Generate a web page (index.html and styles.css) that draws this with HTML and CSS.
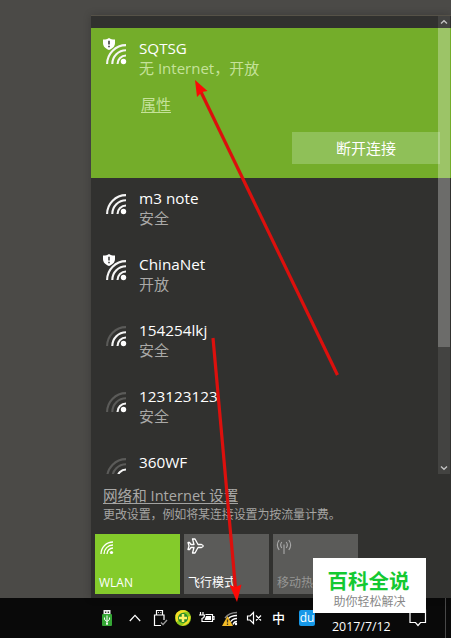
FILE: index.html
```html
<!DOCTYPE html>
<html lang="zh-CN">
<head>
<meta charset="utf-8">
<title>WLAN</title>
<link rel="stylesheet" href="styles.css">
</head>
<body>
<svg class="defs" width="0" height="0" aria-hidden="true">
  <defs>
    <path id="arc1" d="M11.5 20A8.5 8.5 0 0 1 20 11.5"/>
    <path id="arc2" d="M6.3 20A13.7 13.7 0 0 1 20 6.3"/>
    <path id="arc3" d="M1.1 20A18.9 18.9 0 0 1 20 1.1"/>
    <g id="shield"><path fill="#fff" d="M6 0C8 1.4 10 1.6 12 1.5V5C12 8.500 9.500 10.600 6 12C2.500 10.600 0 8.500 0 5V1.500C2 1.600 4 1.400 6 0Z"/><path class="mark" d="M6 2.800V6.600M6 7.700V9.200"/></g>
  </defs>
</svg>
<div class="screen">
  <main class="flyout">
    <div class="list">
      <section class="active">
        <svg class="wifi green" width="24" height="27" viewBox="-3 -6 24 27"><g class="arc"><use href="#arc1"/><use href="#arc2"/><use href="#arc3"/></g><circle cx="17.500" cy="17.500" r="2.700"/><path class="cut" d="M-3 -6H10V1L4 7L-3 4Z"/><use href="#shield" x="-3" y="-6"/></svg>
        <div class="info">
          <div class="name sq">SQTSG</div>
          <div class="state">无 Internet，开放</div>
          <a class="props">属性</a>
        </div>
        <button class="disconnect">断开连接</button>
      </section>
      <section class="network">
        <svg class="wifi" width="24" height="27" viewBox="-3 -6 24 27"><g class="arc"><use href="#arc1"/><use href="#arc2"/><use href="#arc3"/></g><circle cx="17.500" cy="17.500" r="2.700"/></svg>
        <div class="info"><div class="name">m3 note</div><div class="state">安全</div></div>
      </section>
      <section class="network">
        <svg class="wifi" width="24" height="27" viewBox="-3 -6 24 27"><g class="arc"><use href="#arc1"/><use href="#arc2"/><use href="#arc3"/></g><circle cx="17.500" cy="17.500" r="2.700"/><path class="cut" d="M-3 -6H10V1L4 7L-3 4Z"/><use href="#shield" x="-3" y="-6"/></svg>
        <div class="info"><div class="name">ChinaNet</div><div class="state">开放</div></div>
      </section>
      <section class="network">
        <svg class="wifi" width="24" height="27" viewBox="-3 -6 24 27"><g class="arc"><use href="#arc1"/><use href="#arc2"/><use class="dim" href="#arc3"/></g><circle cx="17.500" cy="17.500" r="2.700"/></svg>
        <div class="info"><div class="name">154254lkj</div><div class="state">安全</div></div>
      </section>
      <section class="network">
        <svg class="wifi" width="24" height="27" viewBox="-3 -6 24 27"><g class="arc"><use href="#arc1"/><use class="dim" href="#arc2"/><use class="dim" href="#arc3"/></g><circle cx="17.500" cy="17.500" r="2.700"/></svg>
        <div class="info"><div class="name">123123123</div><div class="state">安全</div></div>
      </section>
      <section class="network last">
        <svg class="wifi" width="24" height="27" viewBox="-3 -6 24 27"><g class="arc"><use href="#arc1"/><use class="dim" href="#arc2"/><use class="dim" href="#arc3"/></g></svg>
        <div class="info"><div class="name">360WF</div></div>
      </section>
    </div>
    <div class="scrollbar">
      <svg width="12" height="12"><path d="M3 7.500L6 4.800L9 7.500"/></svg>
      <div class="thumb"></div>
      <svg class="down" width="12" height="12"><path d="M3 4.500L6 7.200L9 4.500"/></svg>
    </div>
    <footer class="settings">
      <a class="link">网络和 Internet 设置</a>
      <p class="hint">更改设置，例如将某连接设置为按流量计费。</p>
      <div class="tiles">
        <div class="tile on">
          <svg width="18" height="18"><g fill="none" stroke="#fff" stroke-width="1.300"><path d="M3 16A12 12 0 0 1 15 4M6 16A9 9 0 0 1 15 7M9 16A6 6 0 0 1 15 10"/></g><circle cx="13.500" cy="14.500" r="1.600" fill="#fff"/></svg>
          <span>WLAN</span>
        </div>
        <div class="tile">
          <svg width="18" height="18"><path fill="none" stroke="#fff" stroke-width="1.300" stroke-linejoin="round" d="M5.500 1H8L11 6.500H14.500Q18 8 14.500 9.500H11L8 15H5.500L7 9.500H4L2.500 11.500H1L2 8L1 4.500H2.500L4 6.500H7Z"/></svg>
          <span>飞行模式</span>
        </div>
        <div class="tile off">
          <svg width="18" height="18"><path fill="none" stroke="#aaa" stroke-width="1.100" d="M3.200 2Q-.5 7 3.200 12M5.800 4Q3.500 7 5.800 10M12.800 2Q16.500 7 12.800 12M10.200 4Q12.500 7 10.200 10M8 6.500V16"/></svg>
          <span>移动热点</span>
        </div>
      </div>
    </footer>
  </main>
  <nav class="taskbar">
    <svg width="10" height="18" viewBox="0 0 10 18"><path fill="#eee" d="M1.500 1H8.500V5H1.500Z"/><path fill="#333" d="M3 2.500H4.300V4H3ZM5.700 2.500H7V4H5.700Z"/><rect y="5" width="10" height="12" rx="1" fill="#35a635"/><path fill="none" stroke="#fff" d="M5 6.500V15.500M2.500 8.500V10.500L5 12.500L7.500 10.500V8.500"/><circle cx="5" cy="14.800" r="1" fill="#fff"/></svg>
    <svg width="14" height="18"><path class="line" d="M.8 12L6 6.300L11.200 12"/></svg>
    <svg width="15" height="18"><path class="line" d="M3.500 6V1.500H9.500V6M11 11V6H1.500V16.500H8"/><path class="line" d="M5 3.500H5.800M7.400 3.500H8.200"/><path fill="none" stroke="#999" stroke-width="1.400" d="M8 13.500L10 15.500L14 11"/></svg>
    <svg width="18" height="18"><circle cx="9" cy="9" r="8" fill="#8fcb1c"/><path fill="#f5dd26" d="M1.500 6A8 8 0 0 1 14 3Q8 2 6 7Q5 12 2 13ZM16.500 7Q17 16 7 17Q13 14 13 8Z"/><circle cx="9" cy="9" r="5" fill="#27892b"/><path stroke="#fff36b" stroke-width="2.500" d="M9 5V13M5 9H13"/></svg>
    <svg width="17" height="18"><path fill="none" stroke="#fff" stroke-width="1.200" d="M1.500 3V6M4 3V6M0 6H5.500Q5.500 9 3 9.500V12.500H6M6.500 5.500H13.500V12.500H5M13.500 7.500H15V10.500H13.500"/><path fill="#fff" d="M7 7H12V11H5.500Z"/></svg>
    <svg width="16" height="18"><path fill="none" stroke="#888" stroke-width="1.300" d="M3 9Q7 3.600 15 3.500"/><path fill="none" stroke="#fff" stroke-width="1.300" d="M6 10Q9 6.500 15 6.500M8.500 13Q10.500 9.500 15 9.500M11 15.500Q12 12.500 15 12.500"/><circle cx="14" cy="15" r="1.200" fill="#fff"/><path fill="#f3bb27" d="M5.500 7L11 17H0Z"/><path stroke="#43391c" stroke-width="1.300" d="M5.500 10.500V13.500M5.500 14.500V16"/></svg>
    <svg width="16" height="18"><path class="line" d="M1.500 7V11H4L7.500 14.500V3.500L4 7ZM10 6.500L15 11.500M15 6.500L10 11.500"/></svg>
    <span class="ime">中</span>
    <span class="du">du</span>
    <span class="date">2017/7/12</span>
    <svg class="action" width="18" height="20"><path class="line" d="M1 2V14.500H6.500L9 17.500L11.500 14.500H16.500V2Z"/></svg>
    <span class="peek"></span>
  </nav>
  <div class="watermark"><strong>百科全说</strong><span>助你轻松解决</span></div>
  <svg class="arrows" width="451" height="638" viewBox="0 0 451 638">
    <path d="M337.500 375L201 92" stroke="#dc100d" stroke-width="3.200"/>
    <path d="M213 338L235.500 588" stroke="#dc100d" stroke-width="3.200"/>
    <path fill="#fb0a06" d="M195 80L207.500 91L202 92L197 97Z"/>
    <path fill="#fb0a06" d="M237 602L229.500 585L235.500 587L241.500 584.500Z"/>
  </svg>
</div>
</body>
</html>
```
FILE: styles.css
```css
* { box-sizing: border-box; }
body { margin: 0; font-family: "Open Sans", "Noto Sans CJK SC", sans-serif; }
svg { display: block; flex: none; }
.defs { position: absolute; }
.screen {
  position: relative;
  width: 451px;
  height: 638px;
  overflow: hidden;
  padding-top: 15px;
  background: #4b4a47;
}
.flyout {
  position: relative;
  height: 583px;
  margin-left: 91px;
  padding-top: 12px;
  background: #31312f;
  border-top: 1px solid #565248;
  box-shadow: 0 0 8px #0003;
}
.list { height: 446px; overflow: hidden; }
.active {
  display: grid;
  grid-template-columns: 48px 1fr;
  grid-template-rows: 104px 32px;
  height: 150px;
  background: #74ad2a;
}
.network { display: flex; height: 66px; }
.wifi { margin: 10px 12px 0; fill: #fff; }
.arc { fill: none; stroke: #f5f5f5; stroke-width: 2.1; }
.dim { stroke: #5b5b59; }
.cut { fill: #31312f; }
.green .cut { fill: #74ad2a; }
.mark { stroke: #333; stroke-width: 1.5; }
.info { padding-top: 10px; white-space: nowrap; }
.network .info { width: 200px; }
.name { height: 20px; line-height: 20px; font-size: 15.3px; color: #fff; }
.sq { font-size: 15.2px; letter-spacing: 0; }
.state { height: 20px; line-height: 20px; font-size: 15px; color: #aaa9a7; }
.active .state { color: #c5e29a; }
.props {
  display: block;
  width: 30px;
  height: 18px;
  margin: 17px 0 0 2px;
  border-bottom: 1px solid #c5e29a;
  font-size: 15px;
  line-height: 18px;
  color: #c5e29a;
}
.disconnect {
  grid-column: 1 / 3;
  justify-self: end;
  width: 148px;
  height: 32px;
  margin-right: 11px;
  padding: 0;
  border: 0;
  background: #8fc058;
  color: #fff;
  font: 15px/32px "Open Sans", "Noto Sans CJK SC", sans-serif;
}
.scrollbar {
  position: absolute;
  top: 0;
  right: 1px;
  display: flex;
  flex-direction: column;
  width: 12px;
  height: 458px;
  background: #ffffff17;
}
.scrollbar path { fill: none; stroke: #c4c4c4; stroke-width: 1.4; }
.thumb { height: 319px; background: #ffffff38; }
.down { margin-top: auto; }
.settings { padding: 11px 0 0 4px; }
.link {
  display: block;
  width: 135px;
  height: 19px;
  margin-left: 8px;
  border-bottom: 1px solid #a3a3a1;
  font-size: 14.6px;
  line-height: 20px;
  white-space: nowrap;
  color: #aaa9a7;
}
.hint { height: 20px; margin: 2px 0 8px 8px; font-size: 12px; letter-spacing: -.12px; line-height: 18px; color: #a5a4a2; }
.tiles { display: flex; gap: 4px; }
.tile {
  display: flex;
  flex-direction: column;
  justify-content: space-between;
  width: 85px;
  height: 60px;
  padding: 4px 3px 2px;
  background: #5b5b59;
  color: #fff;
  font-size: 12px;
  line-height: 18px;
}
.tile span { padding-left: 1px; }
.on { background: #84cb2b; }
.off { color: #969694; }
.taskbar {
  display: grid;
  grid-template-columns: 27px 24px 21px 25px 23px 24px 25px 28px 32px 78px 36px 1px;
  align-items: center;
  height: 40px;
  padding-left: 102px;
  background: #090909;
  color: #fff;
}
.line { fill: none; stroke: #fff; stroke-width: 1.2; }
.ime { padding-left: 1px; font-size: 13px; font-weight: 500; line-height: 20px; }
.du {
  width: 16px;
  height: 16px;
  border-radius: 2px;
  background: #1698e8;
  font-size: 12px;
  line-height: 15px;
  text-align: center;
}
.date { padding: 18px 0 0 1px; font-size: 12.4px; line-height: 16px; white-space: nowrap; }
.peek { height: 40px; background: #484848; }
.watermark {
  position: absolute;
  left: 313px;
  top: 558px;
  display: flex;
  flex-direction: column;
  align-items: center;
  width: 113px;
  height: 55px;
  padding-top: 9px;
  background: #fff;
}
.watermark strong {
  font-family: "Noto Sans CJK SC", sans-serif;
  font-size: 20.5px;
  font-weight: 700;
  line-height: 26px;
  margin-left: -2px;
  color: #14c932;
}
.watermark span {
  font-family: "Noto Sans CJK SC", sans-serif;
  font-size: 12px;
  line-height: 16px;
  color: #888;
}
.arrows { position: absolute; inset: 0; pointer-events: none; }
```
